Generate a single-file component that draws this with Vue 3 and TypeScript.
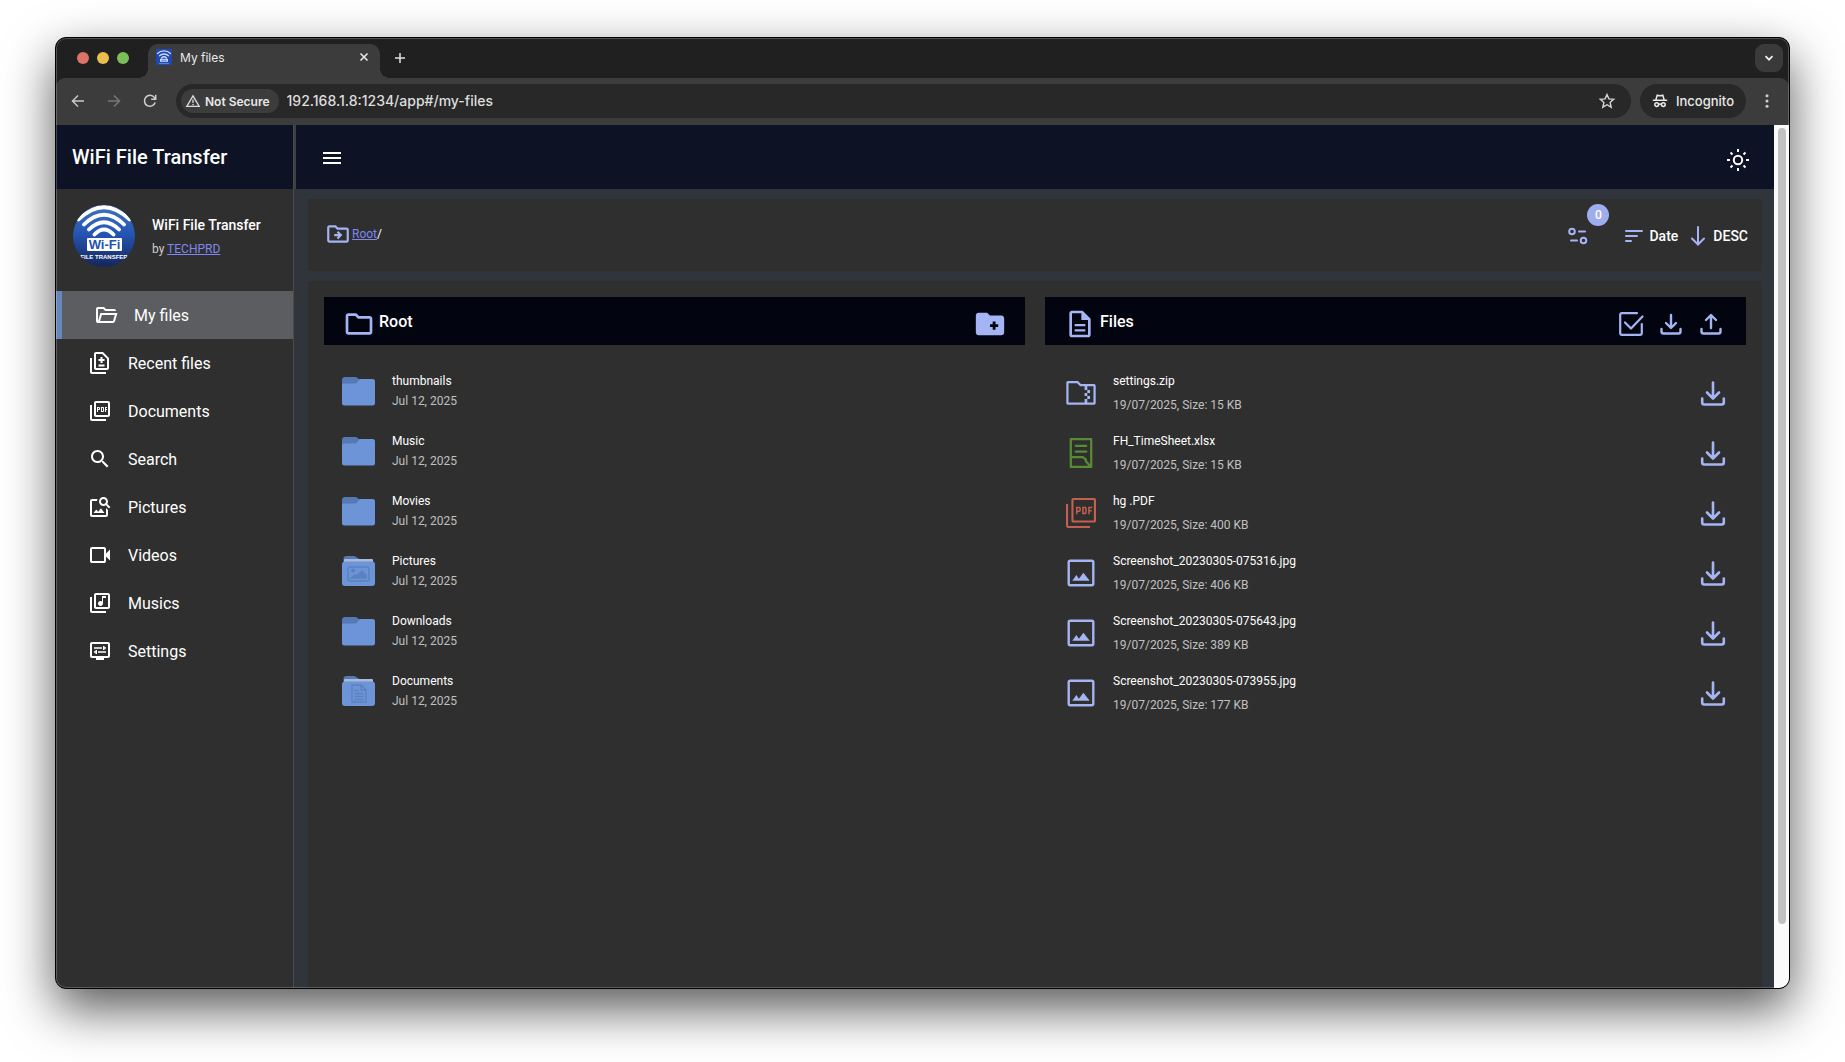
<script setup lang="ts">
import { ref } from 'vue'

interface NavItem { label: string; icon: string; symbol?: boolean }
interface Folder { name: string; date: string; kind: 'plain' | 'picture' | 'document' }
interface FileEntry { name: string; meta: string; kind: 'zip' | 'sheet' | 'pdf' | 'image' }

const address = ref('192.168.1.8:1234/app#/my-files')
const active = ref('My files')

const nav: NavItem[] = [
  { label: 'My files', symbol: true, icon: 'M160-160q-33 0-56.5-23.5T80-240v-480q0-33 23.5-56.5T160-800h240l80 80h320q33 0 56.5 23.5T880-640H447l-80-80H160v480l96-320h684L837-217q-8 26-29.5 41.5T760-160H160Zm84-80h516l72-240H316l-72 240Z' },
  { label: 'Recent files', icon: 'M18 23H4c-1.1 0-2-.9-2-2V7h2v14h14v2zM15 1H8c-1.1 0-1.99.9-1.99 2L6 17c0 1.1.89 2 1.99 2H19c1.1 0 2-.9 2-2V7l-6-6zm4 16H8V3h6.17L19 7.83V17zM14.5 6h-2v2h-2v2h2v2h2v-2h2V8h-2zM10.5 13.5h6v2h-6z' },
  { label: 'Documents', icon: 'M20 2H8c-1.1 0-2 .9-2 2v12c0 1.1.9 2 2 2h12c1.1 0 2-.9 2-2V4c0-1.1-.9-2-2-2zm0 14H8V4h12v12zM4 6H2v14c0 1.1.9 2 2 2h14v-2H4V6zm12 6V9c0-.55-.45-1-1-1h-2v5h2c.55 0 1-.45 1-1zm-2-3h1v3h-1V9zm4 2h1v-1h-1V9h1V8h-2v5h1zm-8 0h1c.55 0 1-.45 1-1V9c0-.55-.45-1-1-1H9v5h1v-2zm0-2h1v1h-1V9z' },
  { label: 'Search', icon: 'M15.5 14h-.79l-.28-.27C15.41 12.59 16 11.11 16 9.5 16 5.91 13.09 3 9.5 3S3 5.91 3 9.5 5.91 16 9.5 16c1.61 0 3.09-.59 4.23-1.57l.27.28v.79l5 4.99L20.49 19l-4.99-5zm-6 0C7.01 14 5 11.99 5 9.5S7.01 5 9.5 5 14 7.01 14 9.5 11.99 14 9.5 14z' },
  { label: 'Pictures', icon: 'M18 13v7H4V6h5.02c.05-.71.22-1.38.48-2H4c-1.1 0-2 .9-2 2v14c0 1.1.9 2 2 2h14c1.1 0 2-.9 2-2v-5l-2-2zm-1.5 5h-11l2.75-3.53 1.96 2.36 2.75-3.54zm2.8-9.11c.44-.7.7-1.51.7-2.39C20 4.01 17.99 2 15.5 2S11 4.01 11 6.5s2.01 4.5 4.49 4.5c.88 0 1.7-.26 2.39-.7L21 13.42 22.42 12 19.3 8.89zM15.5 9C14.12 9 13 7.88 13 6.5S14.12 4 15.5 4 18 5.12 18 6.5 16.88 9 15.5 9z' },
  { label: 'Videos', symbol: true, icon: 'M160-160q-33 0-56.5-23.5T80-240v-480q0-33 23.5-56.5T160-800h480q33 0 56.5 23.5T720-720v180l160-160v440L720-420v180q0 33-23.5 56.5T640-160H160Zm0-80h480v-480H160v480Z' },
  { label: 'Musics', icon: 'M20 2H8c-1.1 0-2 .9-2 2v12c0 1.1.9 2 2 2h12c1.1 0 2-.9 2-2V4c0-1.1-.9-2-2-2zm0 14H8V4h12v12zM12.5 15c1.38 0 2.5-1.12 2.5-2.5V7h3V5h-4v5.51c-.42-.32-.93-.51-1.5-.51-1.38 0-2.5 1.12-2.5 2.5s1.12 2.5 2.5 2.5zM4 6H2v14c0 1.1.9 2 2 2h14v-2H4V6z' },
  { label: 'Settings', icon: 'M20 3H4c-1.11 0-2 .89-2 2v12c0 1.1.89 2 2 2h4v2h8v-2h4c1.1 0 2-.9 2-2V5c0-1.11-.9-2-2-2zm0 14H4V5h16v12zM6 8.25h8v1.5H6zM16.5 9.75H18v-1.5h-1.5V7H15v4h1.5zM10 12.25h8v1.5h-8zM7.5 15H9v-4H7.5v1.25H6v1.5h1.5z' },
]

const folders: Folder[] = [
  { name: 'thumbnails', date: 'Jul 12, 2025', kind: 'plain' },
  { name: 'Music', date: 'Jul 12, 2025', kind: 'plain' },
  { name: 'Movies', date: 'Jul 12, 2025', kind: 'plain' },
  { name: 'Pictures', date: 'Jul 12, 2025', kind: 'picture' },
  { name: 'Downloads', date: 'Jul 12, 2025', kind: 'plain' },
  { name: 'Documents', date: 'Jul 12, 2025', kind: 'document' },
]

const files: FileEntry[] = [
  { name: 'settings.zip', meta: '19/07/2025, Size: 15 KB', kind: 'zip' },
  { name: 'FH_TimeSheet.xlsx', meta: '19/07/2025, Size: 15 KB', kind: 'sheet' },
  { name: 'hg .PDF', meta: '19/07/2025, Size: 400 KB', kind: 'pdf' },
  { name: 'Screenshot_20230305-075316.jpg', meta: '19/07/2025, Size: 406 KB', kind: 'image' },
  { name: 'Screenshot_20230305-075643.jpg', meta: '19/07/2025, Size: 389 KB', kind: 'image' },
  { name: 'Screenshot_20230305-073955.jpg', meta: '19/07/2025, Size: 177 KB', kind: 'image' },
]
</script>

<template>
  <div class="desktop">
    <div class="window">
      <div class="tabstrip">
        <div class="lights">
          <button class="light red" aria-label="Close window"></button>
          <button class="light yellow" aria-label="Minimize window"></button>
          <button class="light green" aria-label="Zoom window"></button>
        </div>
        <div class="tab">
          <svg class="favicon" viewBox="0 0 16 16">
            <rect width="16" height="16" rx="1" fill="#2148b0" />
            <g fill="none" stroke="#c9dcff" stroke-width="1.3" stroke-linecap="round">
              <path d="M1.5 4.5a9.5 9.5 0 0 1 13 0M3.5 6.8a6.5 6.5 0 0 1 9 0M5.5 9a3.6 3.6 0 0 1 5 0" />
            </g>
            <rect x="4" y="9.8" width="8" height="3" fill="#c9dcff" />
            <path d="M5.5 11.3h5M3 14.5h10" stroke="#5c80d6" stroke-width="1" />
          </svg>
          <span class="tab-title">My files</span>
          <button class="plain" aria-label="Close tab">
            <svg width="16" height="16" viewBox="0 0 16 16"><path d="M4.5 4.5l7 7M11.5 4.5l-7 7" stroke="#e6e6e6" stroke-width="1.6" /></svg>
          </button>
        </div>
        <button class="plain new-tab" aria-label="New tab">
          <svg width="16" height="16" viewBox="0 0 16 16"><path d="M8 3v10M3 8h10" stroke="#e0e0e0" stroke-width="1.5" /></svg>
        </button>
        <button class="tab-search" aria-label="Search tabs">
          <svg width="12" height="12" viewBox="0 0 12 12"><path d="M2.5 4.2L6 7.7l3.5-3.5" fill="none" stroke="#f0f0f0" stroke-width="1.7" /></svg>
        </button>
      </div>

      <div class="toolbar">
        <div class="history">
          <button class="plain" aria-label="Back">
            <svg width="16" height="16" viewBox="0 0 16 16"><path d="M14 8H3M8 2.5L2.5 8 8 13.5" fill="none" stroke="#c9c9c9" stroke-width="1.5" /></svg>
          </button>
          <button class="plain" aria-label="Forward">
            <svg width="16" height="16" viewBox="0 0 16 16"><path d="M2 8h11M8 2.5L13.5 8 8 13.5" fill="none" stroke="#777" stroke-width="1.5" /></svg>
          </button>
          <button class="plain" aria-label="Reload">
            <svg width="16" height="16" viewBox="0 0 16 16"><path d="M13.2 9.5A5.5 5.5 0 1 1 12.3 4.4L13.5 6M13.7 1.8v4.5H9.2" fill="none" stroke="#d0d0d0" stroke-width="1.5" /></svg>
          </button>
        </div>
        <div class="omnibox">
          <button class="chip">
            <svg width="16" height="16" viewBox="0 0 16 16"><path d="M8 2.8L1.8 13.3h12.4zM8 6.5v3.5M8 10.9v1.3" fill="none" stroke="#dcdcdc" stroke-width="1.3" /></svg>
            Not Secure
          </button>
          <input v-model="address" class="url" aria-label="Address" spellcheck="false" />
          <button class="plain" aria-label="Bookmark this page">
            <svg width="18" height="18" viewBox="0 0 18 18"><path d="M9 2.5l1.9 4.4 4.8.4-3.6 3.2 1.1 4.7L9 12.7l-4.2 2.5 1.1-4.7-3.6-3.2 4.8-.4z" fill="none" stroke="#d4d4d4" stroke-width="1.4" /></svg>
          </button>
        </div>
        <button class="incognito">
          <svg width="16" height="16" viewBox="0 0 16 16" fill="none" stroke="#e8e8e8" stroke-width="1.5">
            <path d="M.8 7.3h14.4M3.8 7L5.2 2.2q2.8 1 5.600 0L12.200 7" />
            <circle cx="4.7" cy="11.6" r="1.9" /><circle cx="11.3" cy="11.6" r="1.9" /><path d="M6.500 11.300q1.500-.8 3 0" />
          </svg>
          Incognito
        </button>
        <button class="plain menu" aria-label="Browser menu">
          <svg width="16" height="16" viewBox="0 0 16 16" fill="#cfcfcf"><circle cx="8" cy="2.800" r="1.500" /><circle cx="8" cy="8" r="1.500" /><circle cx="8" cy="13.200" r="1.500" /></svg>
        </button>
      </div>

      <div class="app">
        <aside class="sidebar">
          <h1 class="brand">WiFi File Transfer</h1>
          <div class="profile">
            <svg class="logo" viewBox="0 0 62 62">
              <defs>
                <clipPath id="disc"><circle cx="31" cy="31" r="31" /></clipPath>
                <linearGradient id="sky" x1="0" y1="0" x2="0" y2="1">
                  <stop offset="0" stop-color="#3d74c4" /><stop offset=".45" stop-color="#2656b4" /><stop offset="1" stop-color="#14265a" />
                </linearGradient>
              </defs>
              <g clip-path="url(#disc)">
                <rect width="62" height="62" fill="url(#sky)" />
                <g fill="none" stroke="#fff" stroke-width="3.8" stroke-linecap="round">
                  <path d="M5.5 14.500Q31-10 56.500 14.500M11 19.500Q31 0 51 19.500M16 24.500Q31 10 46 24.500M21.500 29.500Q31 19.500 40.500 29.500" />
                </g>
                <rect x="14" y="33" width="35" height="13" rx="1" fill="#fff" />
                <text x="31.500" y="44" text-anchor="middle" class="logo-name">Wi-Fi</text>
                <text x="31" y="54" text-anchor="middle" class="logo-sub">FILE TRANSFER</text>
              </g>
            </svg>
            <div class="who">
              <strong>WiFi File Transfer</strong>
              <span>by <a href="#techprd">TECHPRD</a></span>
            </div>
          </div>
          <nav>
            <a
              v-for="item in nav"
              :key="item.label"
              href="#/my-files"
              class="nav-item"
              :class="{ active: item.label === active }"
              @click.prevent="active = item.label"
            >
              <svg width="24" height="24" :viewBox="item.symbol ? '0 -960 960 960' : '0 0 24 24'" fill="#fff"><path :d="item.icon" /></svg>
              {{ item.label }}
            </a>
          </nav>
        </aside>

        <div class="main">
          <header class="topbar">
            <button class="plain" aria-label="Toggle menu">
              <svg width="24" height="24" viewBox="0 0 24 24"><path d="M3 7h18M3 12h18M3 17h18" stroke="#fff" stroke-width="2" /></svg>
            </button>
            <button class="plain theme" aria-label="Toggle theme">
              <svg width="24" height="24" viewBox="0 0 24 24" fill="none" stroke="#fff" stroke-width="2">
                <circle cx="12" cy="12" r="4.200" />
                <path d="M12 1v3M12 20v3M1 12h3M20 12h3M4.500 4.500l2 2M17.500 17.500l2 2M4.500 19.500l2-2M17.500 6.500l2-2" />
              </svg>
            </button>
          </header>

          <div class="content">
            <section class="panel path">
              <div class="crumbs">
                <svg width="26" height="26" viewBox="0 0 24 24" fill="#a5b4f2">
                  <path d="M20 6h-8l-2-2H4c-1.100 0-2 .9-2 2v12c0 1.100.9 2 2 2h16c1.100 0 2-.9 2-2V8c0-1.100-.9-2-2-2zm0 12H4V6h5.170l2 2H20v10zM12.200 12H8.500v2h3.700l-1.400 1.400 1.400 1.400L16 13l-3.800-3.800-1.400 1.400z" />
                </svg>
                <span><a href="#root">Root</a>/</span>
              </div>
              <div class="sorting">
                <button class="plain filter" aria-label="Filters">
                  <svg width="24" height="24" viewBox="0 0 24 24" fill="none" stroke="#a5b4f2" stroke-width="2" stroke-linecap="round">
                    <circle cx="6" cy="7.500" r="2.800" /><path d="M13 7.500h6M5 16.500h6" /><circle cx="17.500" cy="16.500" r="2.800" />
                  </svg>
                  <span class="badge">0</span>
                </button>
                <button class="sort date">
                  <svg width="20" height="20" viewBox="0 0 20 20"><path d="M2 5h16M2 10h11M2 15h5" stroke="#a5b4f2" stroke-width="2" stroke-linecap="round" /></svg>
                  Date
                </button>
                <button class="sort">
                  <svg width="20" height="24" viewBox="0 0 20 24"><path d="M10 3v17M4 14.500l6 6 6-6" fill="none" stroke="#a5b4f2" stroke-width="2" stroke-linecap="round" /></svg>
                  DESC
                </button>
              </div>
            </section>

            <div class="panel browser">
              <section class="column">
                <div class="bar">
                  <svg width="32" height="32" viewBox="0 0 24 24" fill="#a5b4f2"><path d="M9.170 6l2 2H20v10H4V6h5.170M10 4H4c-1.100 0-2 .9-2 2v12c0 1.100.9 2 2 2h16c1.100 0 2-.9 2-2V8c0-1.100-.9-2-2-2h-8l-2-2z" /></svg>
                  <h2>Root</h2>
                  <div class="tools">
                    <button class="plain" aria-label="New folder">
                      <svg width="34" height="34" viewBox="0 0 24 24" fill="#a5b4f2"><path d="M20 6h-8l-2-2H4c-1.110 0-2 .89-2 2v12c0 1.110.89 2 2 2h16c1.110 0 2-.89 2-2V8c0-1.110-.89-2-2-2zm-2.200 8.200h-1.900v1.900h-2v-1.900H12v-2h1.900v-1.900h2v1.900h1.900z" /></svg>
                    </button>
                  </div>
                </div>
                <ul class="list folders">
                  <li v-for="folder in folders" :key="folder.name" class="row">
                    <svg width="33" height="30" viewBox="0 0 33 30">
                      <template v-if="folder.kind === 'plain'">
                        <path d="M0 4a3 3 0 0 1 3-3h11l3 2h13a3 3 0 0 1 3 3v6H0z" fill="#5679b4" />
                        <path d="M0 9q0-1.500 1.500-1.500h12.500L18 3h12a3 3 0 0 1 3 3v21a2.500 2.500 0 0 1-2.500 2.500h-28A2.500 2.500 0 0 1 0 27z" fill="#6c94d6" />
                      </template>
                      <template v-else>
                        <path d="M1.500 8V3a3 3 0 0 1 3-3h8l5 3H28a3 3 0 0 1 3 3v4h-29.500z" fill="#5679b4" />
                        <rect x="2" y="3" width="29" height="6" rx="1" fill="#a9b9d8" />
                        <rect y="5.500" width="33" height="24.500" rx="3" fill="#6c94d6" />
                        <g v-if="folder.kind === 'picture'" fill="none" stroke="#5a82c2" stroke-width="1.500">
                          <rect x="6" y="11" width="21" height="14" rx="2" />
                          <circle cx="11" cy="14.500" r="1.200" fill="#5a82c2" />
                          <path d="M9 22l4-3 2 1 5-5 4 4v3z" fill="#5a82c2" />
                        </g>
                        <g v-else fill="none" stroke="#5a82c2" stroke-width="1.300">
                          <path d="M10 9h9l5 5v12H10zM19 9v5h5M12.500 14.500h4M12.500 17.500h9M12.500 20.500h9M12.500 23.500h9" />
                        </g>
                      </template>
                    </svg>
                    <div class="info">
                      <span class="name">{{ folder.name }}</span>
                      <span class="meta">{{ folder.date }}</span>
                    </div>
                  </li>
                </ul>
              </section>

              <section class="column">
                <div class="bar">
                  <svg width="32" height="32" viewBox="0 0 24 24" fill="#a5b4f2"><path d="M8 16h8v1.600H8zm0-4h8v1.600H8zm6-10H6c-1.100 0-2 .9-2 2v16c0 1.100.89 2 1.990 2H18c1.100 0 2-.9 2-2V8l-6-6zm4 18H6V4h7v5h5v11z" /></svg>
                  <h2>Files</h2>
                  <div class="tools transfers">
                    <button class="plain" aria-label="Select all">
                      <svg width="28" height="28" viewBox="0 0 28 28" fill="none" stroke="#a5b4f2" stroke-width="2.200" stroke-linecap="round" stroke-linejoin="round"><path d="M20 3.200H5Q3.200 3.200 3.200 5v18q0 1.800 1.800 1.800h18q1.800 0 1.800-1.800v-9M8 12.500l6 6L25.500 6.500" /></svg>
                    </button>
                    <button class="plain" aria-label="Download all">
                      <svg width="28" height="28" viewBox="0 0 28 28" fill="none" stroke="#a5b4f2" stroke-width="2.400" stroke-linecap="round" stroke-linejoin="round"><path d="M14 5v12M9 13l5 5 5-5M4.500 19v2.500q0 2 2 2h15q2 0 2-2V19" /></svg>
                    </button>
                    <button class="plain" aria-label="Upload">
                      <svg width="28" height="28" viewBox="0 0 28 28" fill="none" stroke="#a5b4f2" stroke-width="2.400" stroke-linecap="round" stroke-linejoin="round"><path d="M14 18V6M9 10l5-5 5 5M4.500 19v2.500q0 2 2 2h15q2 0 2-2V19" /></svg>
                    </button>
                  </div>
                </div>
                <ul class="list files">
                  <li v-for="file in files" :key="file.name" class="row">
                    <svg width="36" height="36" viewBox="0 0 24 24" fill="#a5b4f2">
                      <path v-if="file.kind === 'zip'" d="M20.700 6H12l-2-2H3.300Q2.200 4 2.200 5.100v13.800q0 .9 1.100.9h17.400q1.100 0 1.100-1.100V7.100Q21.800 6 20.700 6zM16.200 12h-1.800v2h1.800v2h-1.800v2.300H3.700V5.500h5.700l2 2h3V10h1.800v2zm4.100 6.300h-4.100V16H18v-2h-1.800v-2H18v-2h-1.800V7.500h4.100v10.800z" />
                      <path v-else-if="file.kind === 'sheet'" d="M5.200 2.700h13.600v18.600H5.200zM8.500 7.200h7M8.500 11h7M5.200 14.800h8l2 1.500v1.200l3.600 3.800" fill="none" stroke="#568c35" stroke-width="1.500" stroke-linecap="round" stroke-linejoin="round" />
                      <g v-else-if="file.kind === 'pdf'" fill="none" stroke="#c4604f" stroke-width="1.400">
                        <rect x="6.300" y="2.700" width="15" height="15" rx=".6" />
                        <path d="M2.700 6v14.500q0 .8.8.8H18" />
                        <path d="M9.200 12.800V8.300h1.600q.6 0 .6.6v1.300q0 .6-.6.6H9.200M13.300 8.300v4h1.400q.6 0 .6-.6V8.900q0-.6-.6-.6zM17.300 12.800V8.300h2.200M17.300 10.500h1.800" stroke-width="1" />
                      </g>
                      <g v-else>
                        <rect x="3.800" y="3.800" width="16.400" height="16.400" rx="1" fill="none" stroke="#a5b4f2" stroke-width="1.600" />
                        <path d="M6.200 17.200l2.700-3.800 1.700 2.400 3-4 4.200 5.400z" />
                      </g>
                    </svg>
                    <div class="info">
                      <span class="name">{{ file.name }}</span>
                      <span class="meta">{{ file.meta }}</span>
                    </div>
                    <button class="plain" :aria-label="'Download ' + file.name">
                      <svg width="36" height="36" viewBox="0 0 36 36" fill="none" stroke="#a5b4f2" stroke-width="2.600" stroke-linecap="round" stroke-linejoin="round"><path d="M18 7.500V23M12 17.500L18 23.500l6-6M7.200 23.500v4q0 2 2 2h17.600q2 0 2-2v-4" /></svg>
                    </button>
                  </li>
                </ul>
              </section>
            </div>
          </div>
        </div>
        <div class="scrollbar"><div class="thumb"></div></div>
      </div>
    </div>
  </div>
</template>

<style>
body { background: #fff; }
</style>

<style scoped>
* { box-sizing: border-box; }
button { font: inherit; color: inherit; border: 0; margin: 0; cursor: pointer; }
svg { display: block; flex: none; }
.plain { display: block; padding: 0; background: none; }
.desktop { display: flex; min-height: 100vh; padding: 37px 55px 73px; font-family: Roboto, "Liberation Sans", sans-serif; color: #fff; }
.window {
  position: relative; flex: 1; min-width: 0; display: flex; flex-direction: column; overflow: hidden;
  border: 1px solid #000; border-radius: 11px; background: #202020;
  box-shadow: 0 20px 50px rgba(0, 0, 0, .66);
}
.window::after { content: ""; position: absolute; inset: 0; border: 1px solid rgba(255, 255, 255, .22); border-radius: 10px; pointer-events: none; }

.tabstrip { display: flex; align-items: flex-start; height: 40px; padding: 6px 6px 0 21px; font-family: Inter, sans-serif; }
.lights { display: flex; gap: 8px; padding: 8px 19px 0 0; }
.light { width: 12px; height: 12px; padding: 0; border-radius: 50%; }
.red { background: #dc7366; }
.yellow { background: #e8bf4e; }
.green { background: #7cbf5a; }
.tab { position: relative; display: flex; align-items: center; width: 232px; height: 34px; padding: 0 8px 8px; border-radius: 10px 10px 0 0; background: #3c3c3c; font-size: 12px; }
.tab::before, .tab::after { content: ""; position: absolute; bottom: 0; width: 10px; height: 10px; }
.tab::before { left: -10px; background: radial-gradient(circle at 0 0, transparent 10px, #3c3c3c 10px); }
.tab::after { right: -10px; background: radial-gradient(circle at 100% 0, transparent 10px, #3c3c3c 10px); }
.favicon { width: 16px; height: 16px; }
.tab-title { flex: 1; padding-left: 8px; color: #e8e8e8; }
.new-tab { margin: 6px 0 0 12px; }
.tab-search { display: flex; align-items: center; justify-content: center; width: 28px; height: 28px; margin-left: auto; padding: 0; border-radius: 9px; background: #3a3a3a; }

.toolbar { display: flex; align-items: center; height: 47px; padding: 0 14px 1px; border-radius: 9px 9px 0 0; background: #3c3c3c; font-family: Inter, sans-serif; }
.history { display: flex; gap: 20px; padding-right: 18px; }
.omnibox { display: flex; align-items: center; flex: 1; height: 34px; padding: 0 15px 0 5px; border-radius: 17px; background: #282828; }
.chip { display: flex; align-items: center; gap: 4px; height: 24px; padding: 0 9px 0 4px; border-radius: 12px; background: #3c3c3c; color: #e8e8e8; font-size: 12px; font-weight: 600; }
.url { flex: 1; min-width: 0; padding: 0 8px; border: 0; outline: 0; background: none; color: #dedede; font: 500 14px/20px Inter, sans-serif; }
.incognito { display: flex; align-items: center; gap: 8px; height: 34px; margin-left: 9px; padding: 0 12px; border-radius: 17px; background: #282828; color: #e8e8e8; font-size: 13px; font-weight: 500; }
.menu { margin-left: 13px; }

.app { display: flex; flex: 1; background: #2f2f2f; }
.sidebar { display: flex; flex-direction: column; width: 238px; border-right: 1px solid #4a4a4a; background: #2f2f2f; }
.brand { height: 64px; margin: 0; padding-left: 16px; background: #0d1224; font-size: 20px; font-weight: 500; line-height: 64px; }
.profile { display: flex; gap: 17px; height: 102px; padding: 16px 17px; }
.logo { width: 62px; height: 62px; }
.logo-name { font: bold 13px "Liberation Sans", sans-serif; fill: #2453ae; }
.logo-sub { font: bold 6px "Liberation Sans", sans-serif; fill: #fff; }
.who { display: flex; flex-direction: column; padding-top: 8px; line-height: 24px; font-size: 12px; color: #d0d0d0; }
.who strong { font-size: 14px; font-weight: 500; color: #fff; }
a { color: #8087f0; }
.nav-item { display: flex; align-items: center; gap: 16px; height: 48px; padding-left: 32px; color: #fff; font-size: 16px; text-decoration: none; }
.nav-item.active { border-left: 6px solid #6688bd; background: #5b5d61; }

.main { display: flex; flex: 1; flex-direction: column; min-width: 0; background: #30343b; }
.topbar { display: flex; align-items: center; justify-content: space-between; height: 64px; padding: 2px 24px 0; border-left: 2px solid #3c3f44; background: #0d1224; }
.theme { margin-top: 4px; }
.content { display: flex; flex: 1; flex-direction: column; gap: 10px; padding: 10px 12px 0 14px; }
.panel { background: #2f2f2f; }
.path { display: flex; justify-content: space-between; height: 72px; padding: 0 14px 0 17px; }
.crumbs { display: flex; align-items: center; gap: 1px; padding-bottom: 2px; font-size: 12px; line-height: 16px; }
.sorting { display: flex; align-items: center; padding-top: 2px; font-size: 14px; font-weight: 500; }
.filter { position: relative; margin-right: 34px; }
.badge { position: absolute; left: 21px; top: -20px; width: 22px; height: 22px; border-radius: 50%; background: #9dadf0; font-size: 12px; line-height: 22px; }
.sort { display: flex; align-items: center; gap: 5px; padding: 0; background: none; }
.date { margin-right: 10px; }

.browser { display: flex; flex: 1; gap: 20px; padding: 16px 16px 0; }
.column { flex: 1; min-width: 0; }
.bar { display: flex; align-items: center; gap: 4px; height: 48px; padding: 6px 18px 0 19px; background: #020510; }
h2 { margin: 0 0 4px; font-size: 16px; font-weight: 500; line-height: 20px; }
.tools { display: flex; margin-left: auto; }
.transfers { gap: 12px; padding-right: 3px; }
.list { margin: 0; padding: 0; list-style: none; }
.folders { padding-top: 16px; }
.files { padding-top: 18px; }
.row { display: flex; align-items: center; height: 60px; padding: 0 15px 0 18px; }
.folders .row { gap: 17px; }
.files .row { gap: 14px; }
.info { display: flex; flex: 1; flex-direction: column; font-size: 12px; line-height: 20px; }
.files .info { gap: 4px; }
.meta { color: #c0c0c0; }

.scrollbar { width: 15px; padding: 3px 3px 64px 4px; background: #fafafa; }
.thumb { height: 100%; border-radius: 4px; background: #c1c1c1; }
</style>
